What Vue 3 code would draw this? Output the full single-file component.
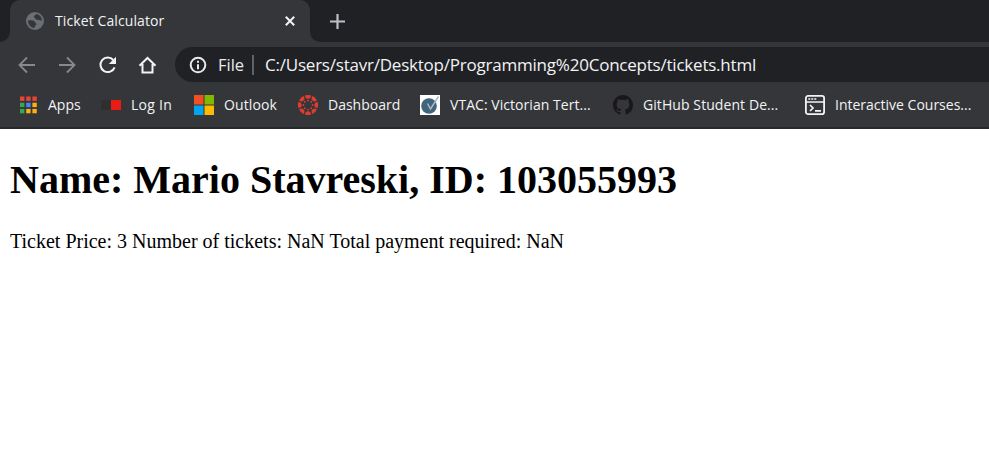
<script setup>
const dots = ['#ea4335', '#ea4335', '#ea4335', '#34a853', '#4285f4', '#fbb016', '#34a853', '#fbb016', '#fbb016']
const angles = [0, 45, 90, 135, 180, 225, 270, 315]
</script>

<template>
  <div class="browser">
    <header class="tabstrip">
      <div class="tab">
        <svg class="globe" viewBox="0 0 18 18"><circle cx="9" cy="9" r="9" fill="#6b6e73" /><path d="M2 8.500C3.500 8 6.500 8 7.800 8.800C9 9.600 8.800 11 10 11.200C11 11.500 10.600 13 9.500 13.200C8.500 13.500 9 15 8.600 16A7 7 0 0 1 2 8.500Z" fill="#35363a" /><path d="M10.300 2.100C9.800 3.600 8 3.300 7.900 4.600C7.800 6 9.300 5.500 9.600 6.700C9.900 7.900 11 8 12.100 7.700C13.500 7.300 14 8.800 15.900 8.500A7 7 0 0 0 10.300 2.100Z" fill="#35363a" /></svg>
        <span class="title">Ticket Calculator</span>
        <svg class="close" viewBox="0 0 10 10"><path d="M.8.8l8.400 8.400M9.200.8L.8 9.200" stroke="#f1f3f4" stroke-width="2" fill="none" /></svg>
      </div>
      <svg class="plus" viewBox="0 0 15 15"><path d="M7.500 0v15M0 7.500h15" stroke="#bdc1c6" stroke-width="2.200" /></svg>
    </header>

    <nav class="toolbar">
      <svg class="nav dim" viewBox="0 0 20 20"><path d="M18 10H3M10 2.500L2.500 10l7.500 7.500" /></svg>
      <svg class="nav dim" viewBox="0 0 20 20"><path d="M2 10h15M10 2.500l7.500 7.500-7.500 7.500" /></svg>
      <svg class="nav" viewBox="0 0 20 20"><path d="M17.600 12.300A7.300 7.300 0 1 1 16.300 5" /><path d="M19 1.800v7.200h-7.200z" fill="#f1f3f4" stroke="none" /></svg>
      <svg class="nav" viewBox="0 0 20 20"><path d="M2.500 10.700L10.500 3l8 7.700M5.500 9v8.500h10V9" /></svg>
      <div class="omnibox">
        <svg class="info" viewBox="0 0 18 18"><circle cx="9" cy="9" r="7.300" fill="none" stroke="#e8eaed" stroke-width="2" /><path d="M9 8.200v5M9 4.800v1.900" stroke="#e8eaed" stroke-width="2" /></svg>
        <span class="scheme">File</span>
        <i class="divider"></i>
        <span class="url">C:/Users/stavr/Desktop/Programming%20Concepts/tickets.html</span>
      </div>
    </nav>

    <nav class="bookmarks">
      <a class="item apps">
        <svg class="icon" viewBox="0 0 20 20"><rect v-for="(c, i) in dots" :key="i" :x="2 + (i % 3) * 6.200" :y="1.500 + Math.floor(i / 3) * 6.200" width="4.400" height="4.400" :fill="c" /></svg>
        <span>Apps</span>
      </a>
      <a class="item login">
        <svg class="icon" viewBox="0 0 20 20"><path d="M0 5h10v10H0z" fill="#302f30" /><path d="M10 5h10v10H10z" fill="#e91d16" /></svg>
        <span>Log In</span>
      </a>
      <a class="item outlook">
        <svg class="icon" viewBox="0 0 20 20"><path d="M0 0h9.500v9.500H0z" fill="#f25022" /><path d="M10.500 0H20v9.500h-9.500z" fill="#7fba00" /><path d="M0 10.500h9.500V20H0z" fill="#00a4ef" /><path d="M10.500 10.500H20V20h-9.500z" fill="#ffb900" /></svg>
        <span>Outlook</span>
      </a>
      <a class="item dash">
        <svg class="icon" viewBox="0 0 20 20"><g v-for="a in angles" :key="a" :transform="`rotate(${a} 10 10)`" fill="#e13c2f"><path d="M6.900 .5Q10-.6 13.100 .5Q12.700 3.700 10 3.700T6.900 .5Z" /><circle cx="10" cy="5.400" r=".9" /></g></svg>
        <span>Dashboard</span>
      </a>
      <a class="item vtac">
        <svg class="icon" viewBox="0 0 20 20"><path d="M0 0h20v20H0z" fill="#fff" /><circle cx="9" cy="11" r="7.800" fill="#41637b" /><path d="M7.500 8.500l3 5.500L18.500 1.500" fill="none" stroke="#a9bac6" stroke-width="1.500" /></svg>
        <span>VTAC: Victorian Tert...</span>
      </a>
      <a class="item github">
        <svg class="icon" viewBox="0 0 16 16"><path fill="#191717" d="M8 0C3.580 0 0 3.580 0 8c0 3.540 2.290 6.530 5.470 7.590.4.070.55-.17.55-.38 0-.19-.01-.82-.01-1.490-2.010.37-2.530-.49-2.690-.94-.09-.23-.48-.94-.82-1.130-.28-.15-.68-.52-.01-.53.63-.01 1.080.58 1.230.82.72 1.210 1.870.87 2.330.66.07-.52.28-.87.51-1.070-1.780-.2-3.640-.89-3.640-3.950 0-.87.31-1.590.82-2.150-.08-.2-.36-1.020.08-2.120 0 0 .67-.21 2.200.82.64-.18 1.320-.27 2-.27s1.360.09 2 .27c1.530-1.040 2.200-.82 2.200-.82.44 1.100.16 1.920.08 2.120.51.56.82 1.270.82 2.150 0 3.070-1.870 3.750-3.650 3.950.29.25.54.73.54 1.480 0 1.070-.01 1.930-.01 2.200 0 .21.15.46.55.38A8.010 8.010 0 0 0 16 8c0-4.420-3.580-8-8-8Z" /></svg>
        <span>GitHub Student De...</span>
      </a>
      <a class="item courses">
        <svg class="icon" viewBox="0 0 20 20" fill="none" stroke="#f1f3f4"><rect x=".9" y=".9" width="18.200" height="18.200" rx="2.200" stroke-width="1.800" /><path d="M1 7h18" stroke-width="1.500" /><path d="M3.300 4h8" stroke-width="1.500" stroke-dasharray="2 1" /><path d="M5 10l3 3-3 3M10 15.800h6" stroke-width="1.700" /></svg>
        <span>Interactive Courses...</span>
      </a>
    </nav>

    <main class="page">
      <h1>Name: Mario Stavreski, ID: 103055993</h1>
      <p>Ticket Price: 3 Number of tickets: NaN Total payment required: NaN</p>
    </main>
  </div>
</template>

<style>
body { background: #fff; }
</style>

<style scoped>
.browser { width: 100%; height: 475px; overflow: hidden; background: #fff; font-family: "Open Sans", "Noto Sans", sans-serif; color: #f1f3f4; }
.browser span { white-space: nowrap; }
svg { display: block; flex: none; }
.tabstrip { display: flex; align-items: center; height: 42px; padding-left: 10px; background: linear-gradient(#35363a, #35363a) 0 100% / 320px 10px no-repeat #202124; position: relative; }
.tabstrip::before, .tabstrip::after { content: ""; position: absolute; bottom: 0; width: 10px; height: 42px; background: #202124; }
.tabstrip::before { left: 0; border-bottom-right-radius: 10px; }
.tabstrip::after { left: 310px; border-bottom-left-radius: 10px; }
.tab { display: flex; align-items: center; box-sizing: border-box; width: 300px; height: 42px; padding: 0 15px 0 16px; background: #35363a; border-radius: 10px 10px 0 0; }
.globe { width: 18px; height: 18px; }
.title { flex: 1; margin-left: 11px; font-size: 14px; line-height: 20px; letter-spacing: 0.1px; }
.close { width: 10px; height: 10px; }
.plus { width: 15px; height: 15px; margin-left: 20px; position: relative; z-index: 1; }
.toolbar { display: flex; align-items: center; height: 45px; padding-left: 17px; background: #35363a; }
.nav { width: 20px; height: 20px; margin-right: 20px; fill: none; stroke: #f1f3f4; stroke-width: 2; }
.dim { stroke: #87898c; stroke-width: 1.8; }
.omnibox { display: flex; flex: 1; align-items: center; height: 35px; margin-left: -2px; padding-left: 14px; border-radius: 18px 0 0 18px; background: #202124; line-height: 24px; }
.info { width: 18px; height: 18px; }
.scheme { width: 25px; margin-left: 11px; color: #e8eaed; font-size: 16.5px; }
.divider { width: 2px; height: 20px; margin: 0 11px 0 9px; background: #5f6368; }
.url { font-size: 17px; letter-spacing: -0.22px; }
.bookmarks { display: flex; align-items: center; box-sizing: border-box; height: 42px; padding: 0 0 5px 18px; border-bottom: 2px solid #28292c; background: #35363a; font-size: 14px; line-height: 20px; }
.item { display: flex; flex: none; align-items: center; gap: 10px; }
.icon { width: 20px; height: 20px; }
.apps { width: 83px; }
.login { width: 93px; letter-spacing: 0.25px; }
.outlook { width: 104px; letter-spacing: 0.1px; }
.dash { width: 122px; }
.vtac { width: 193px; letter-spacing: 0.05px; }
.github { width: 192px; letter-spacing: 0.08px; }
.courses { width: 180px; }
.page { padding: 0 10px; color: #000; font-family: "Liberation Serif", "Times New Roman", serif; }
h1 { margin: 28px 0 0; font-size: 40px; line-height: 46px; }
p { margin: 27px 0 0; font-size: 20px; line-height: 23px; }
</style>
